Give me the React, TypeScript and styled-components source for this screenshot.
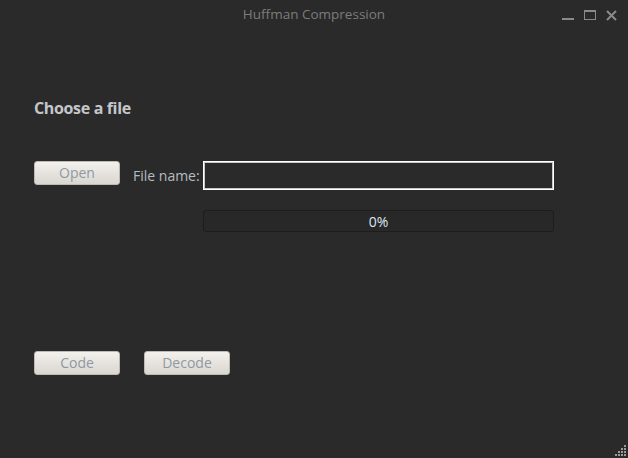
import React from "react";
import styled, { createGlobalStyle } from "styled-components";

const Global = createGlobalStyle`
  html, body { margin: 0; padding: 0; background: #2a2a2a; }
  body { font-family: "Open Sans", "DejaVu Sans", sans-serif; }
`;

const Window = styled.div`
  position: relative;
  width: 628px;
  height: 458px;
  background: #2a2a2a;
  display: flex;
  flex-direction: column;
  overflow: hidden;
`;

const TitleBar = styled.div`
  height: 28px;
  display: grid;
  grid-template-columns: 1fr auto 1fr;
  align-items: center;
`;

const Title = styled.div`
  grid-column: 2;
  color: #7c7c7c;
  font-size: 13.5px;
  line-height: 28px;
`;

const Controls = styled.div`
  grid-column: 3;
  justify-self: end;
  display: flex;
  align-items: center;
  gap: 10px;
  padding-right: 11px;
  padding-top: 2px;
`;

const Content = styled.div`
  flex: 1;
  display: flex;
  flex-direction: column;
  padding: 0 34px;
`;

const Heading = styled.h1`
  margin: 69px 0 0 0;
  font-size: 16px;
  line-height: 22px;
  font-weight: 700;
  color: #c4c7ca;
  letter-spacing: -0.35px;
`;

const FormGrid = styled.div`
  margin-top: 42px;
  display: grid;
  grid-template-columns: 86px 83px 351px;
  grid-template-rows: 29px 22px;
  row-gap: 20px;
`;

const Button = styled.button`
  width: 86px;
  height: 24px;
  padding: 0;
  border: 1px solid #bdb9b3;
  border-radius: 3px;
  background: linear-gradient(#f3f1ed, #dad6d0);
  color: #8e99a4;
  font-family: "Open Sans", "DejaVu Sans", sans-serif;
  font-size: 14px;
  line-height: 20px;
  align-self: start;
`;

const Label = styled.label`
  align-self: center;
  padding-left: 13px;
  color: #b5bcc3;
  font-size: 14px;
  line-height: 20px;
  white-space: nowrap;
`;

const Input = styled.input`
  box-sizing: border-box;
  width: 351px;
  height: 29px;
  margin: 0;
  border: 1px solid #ffffff;
  box-shadow: inset 0 0 0 1px #c8c8c8;
  background: #2a2a2a;
  outline: none;
  color: #ddd;
`;

const Progress = styled.div`
  grid-column: 3;
  box-sizing: border-box;
  height: 22px;
  border: 1px solid #1d1d1d;
  border-radius: 3px;
  background: #282828;
  display: flex;
  align-items: center;
  justify-content: center;
  color: #dfe6f2;
  font-size: 14px;
`;

const ActionRow = styled.div`
  margin-top: 119px;
  display: flex;
  gap: 24px;
`;

const Grip = styled.svg`
  position: absolute;
  right: 2px;
  bottom: 2px;
`;

export default function App() {
  const dots: Array<[number, number]> = [];
  for (let r = 0; r < 4; r++) {
    for (let c = 3 - r; c < 4; c++) dots.push([c * 3, r * 3]);
  }
  return (
    <Window>
      <Global />
      <TitleBar>
        <Title>Huffman Compression</Title>
        <Controls>
          <svg width="12" height="12" viewBox="0 0 12 12">
            <rect x="0" y="9" width="12" height="2" fill="#8a8a8a" />
          </svg>
          <svg width="12" height="10" viewBox="0 0 12 10">
            <rect x="0.5" y="0.5" width="11" height="9" fill="none" stroke="#8a8a8a" />
            <rect x="0" y="0" width="12" height="2" fill="#8a8a8a" />
          </svg>
          <svg width="11" height="11" viewBox="0 0 11 11">
            <path d="M1 1 L10 10 M10 1 L1 10" stroke="#8a8a8a" strokeWidth="2" />
          </svg>
        </Controls>
      </TitleBar>
      <Content>
        <Heading>Choose a file</Heading>
        <FormGrid>
          <Button>Open</Button>
          <Label>File name:</Label>
          <Input type="text" />
          <Progress>0%</Progress>
        </FormGrid>
        <ActionRow>
          <Button>Code</Button>
          <Button>Decode</Button>
        </ActionRow>
      </Content>
      <Grip width="11" height="11" viewBox="0 0 11 11">
        {dots.map(([x, y], i) => (
          <rect key={i} x={x} y={y} width="2" height="2" fill="#9a9a9a" />
        ))}
      </Grip>
    </Window>
  );
}
